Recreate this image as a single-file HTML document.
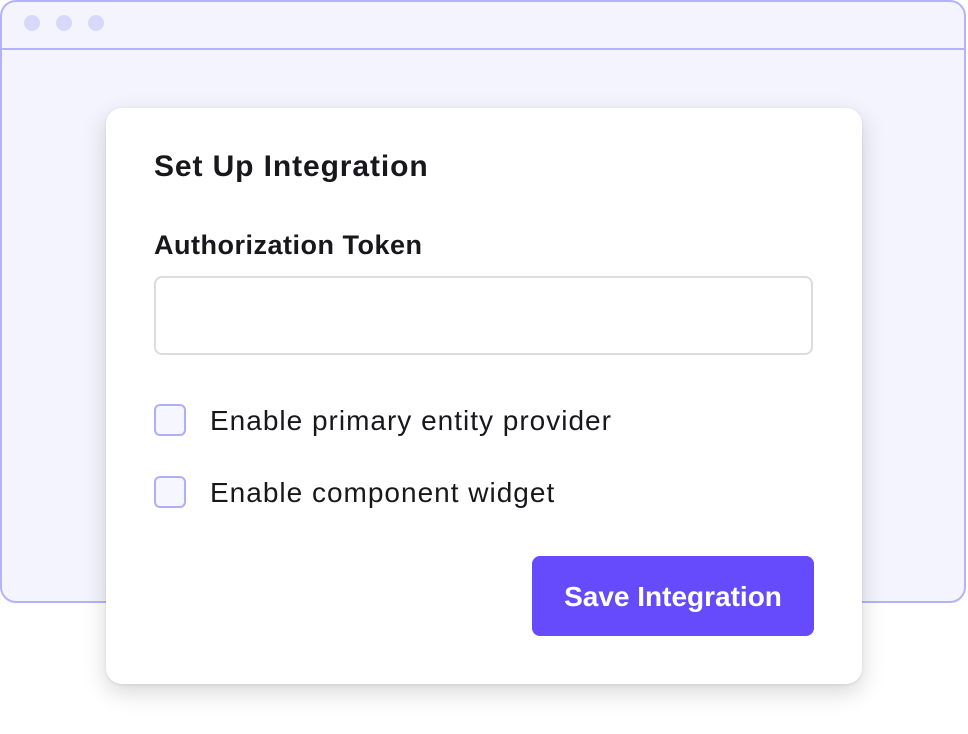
<!DOCTYPE html>
<html><head><style>
body{margin:0;width:968px;height:734px;background:#fff;position:relative;overflow:hidden;font-family:"Liberation Sans",sans-serif;}
.win{position:absolute;left:0;top:0;width:966px;height:603px;border:2px solid #b3b3fb;border-radius:16px;background:#f4f4fe;box-sizing:border-box;}
.bar{position:absolute;left:0;right:0;top:46px;height:2px;background:#b3b3fb;}
.dot{position:absolute;top:13px;width:16px;height:16px;border-radius:50%;background:#d8d8fa;}
.card{position:absolute;left:106px;top:108px;width:756px;height:576px;background:#fff;border-radius:16px;box-shadow:0 8px 24px rgba(0,0,0,0.16),0 1px 3px rgba(0,0,0,0.08);}
.t{position:absolute;color:#17171c;white-space:nowrap;}
.inp{position:absolute;left:48px;top:168px;width:659px;height:79px;border:2px solid #dcdcdc;border-radius:8px;box-sizing:border-box;}
.cb{position:absolute;left:48px;width:32px;height:32px;border:2px solid #aeaefa;border-radius:6px;background:#f6f6fe;box-sizing:border-box;}
.btn{position:absolute;left:426px;top:448px;width:282px;height:80px;background:#654bfb;border-radius:8px;color:#fff;font-size:28px;font-weight:bold;text-align:center;line-height:82px;}
</style></head><body>
<div class="win"><div class="bar"></div>
<div class="dot" style="left:22px"></div><div class="dot" style="left:54px"></div><div class="dot" style="left:86px"></div></div>
<div class="card">
<div class="t" style="left:48px;top:42px;font-size:30px;font-weight:bold;letter-spacing:0.9px;">Set Up Integration</div>
<div class="t" style="left:48px;top:122px;font-size:27px;font-weight:bold;letter-spacing:0.5px;">Authorization Token</div>
<div class="inp"></div>
<div class="cb" style="top:296px"></div>
<div class="t" style="left:104px;top:297px;font-size:28px;letter-spacing:1px;">Enable primary entity provider</div>
<div class="cb" style="top:368px"></div>
<div class="t" style="left:104px;top:369px;font-size:28px;letter-spacing:1px;">Enable component widget</div>
<div class="btn">Save Integration</div>
</div>
</body></html>
